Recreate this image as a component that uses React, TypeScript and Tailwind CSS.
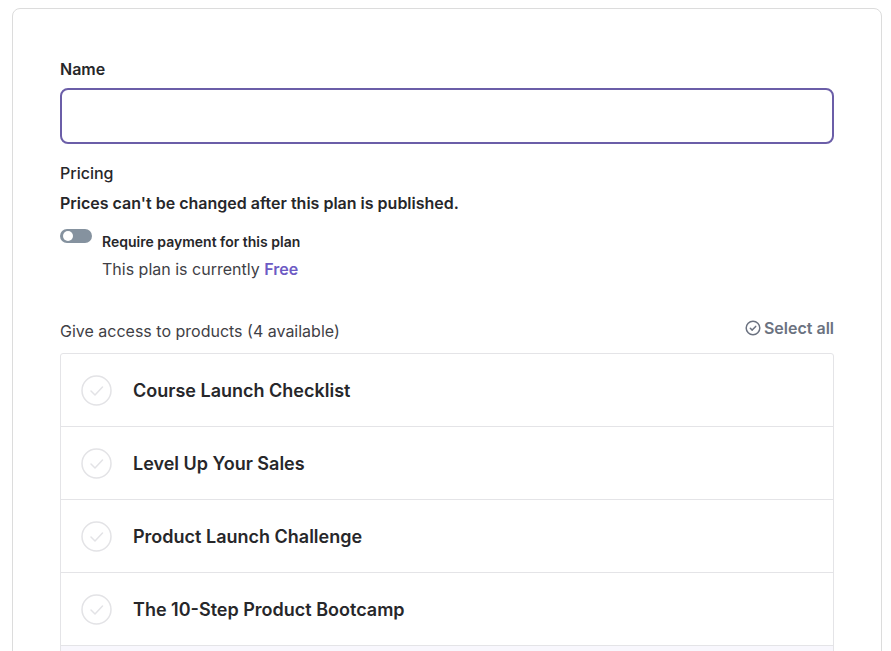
import React from "react";

const products = [
  "Course Launch Checklist",
  "Level Up Your Sales",
  "Product Launch Challenge",
  "The 10-Step Product Bootcamp",
];

function CircleCheck() {
  return (
    <svg width="31" height="31" viewBox="0 0 31 31" fill="none">
      <circle cx="15.5" cy="15.5" r="14.5" stroke="#e3e3e6" strokeWidth="1.5" />
      <path d="M10 16l4 4 7.5-8" stroke="#e3e3e6" strokeWidth="1.5" strokeLinecap="round" strokeLinejoin="round" />
    </svg>
  );
}

export default function App() {
  return (
    <div className="bg-white pl-[12px] pr-[9px] pt-[8px] overflow-hidden h-[651px]" style={{ fontFamily: "Inter, 'Noto Sans', sans-serif" }}>
      <div className="border border-[#dcdcdc] rounded-[8px] px-[47px] pt-[50px] pb-10 h-[700px]">
        <div className="text-[16px] font-semibold text-[#27272a] leading-[20px]">Name</div>
        <input className="mt-[9px] block w-full h-[56px] rounded-[8px] border-2 border-[#6b5ea8] outline-none px-3" />
        <div className="mt-[19px] text-[16px] font-medium text-[#27272a] leading-[20px]">Pricing</div>
        <div className="mt-[10px] text-[16px] font-semibold text-[#27272a] leading-[20px]">Prices can't be changed after this plan is published.</div>
        <div className="mt-[16px] flex items-start gap-[10px]">
          <div className="w-[32px] h-[14px] rounded-full bg-[#85929f] relative">
            <div className="absolute left-[3px] top-[2px] w-[10px] h-[10px] rounded-full bg-white" />
          </div>
          <div>
            <div className="text-[14px] font-semibold text-[#27272a] leading-[22px] mt-[2px]">Require payment for this plan</div>
            <div className="mt-[6px] text-[16px] text-[#3f3f46] leading-[20px]">
              This plan is currently <span className="font-semibold text-[#6d5bc4]">Free</span>
            </div>
          </div>
        </div>
        <div className="mt-[42px] flex items-center justify-between">
          <div className="text-[16px] text-[#3f3f46] leading-[20px]">Give access to products (4 available)</div>
          <div className="flex items-center gap-[3px] text-[16px] font-semibold text-[#6b7280] leading-[20px] -mt-[7px]">
            <svg width="16" height="16" viewBox="0 0 16 16" fill="none">
              <circle cx="8" cy="8" r="6.8" stroke="#6b7280" strokeWidth="1.5" />
              <path d="M5.3 8.2l1.9 1.9 3.5-3.7" stroke="#6b7280" strokeWidth="1.5" strokeLinecap="round" strokeLinejoin="round" />
            </svg>
            <span>Select all</span>
          </div>
        </div>
        <div className="mt-[12px] border border-[#e4e4e7] rounded-[3px]">
          {products.map((p) => (
            <div key={p} className="h-[73px] border-b border-[#e4e4e7] flex items-center pl-[20px] gap-[21px]">
              <CircleCheck />
              <span className="text-[18px] font-semibold text-[#27272a]">{p}</span>
            </div>
          ))}
          <div className="h-[73px] bg-[#f8f7fd]" />
        </div>
      </div>
    </div>
  );
}
